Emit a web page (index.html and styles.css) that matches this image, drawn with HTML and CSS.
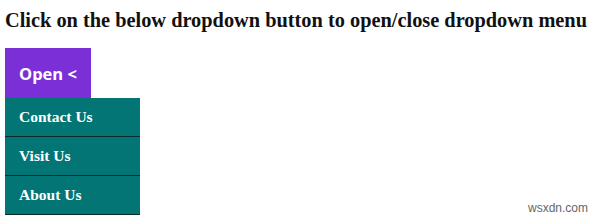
FILE: index.html
```html
<!DOCTYPE html>
<html>
<head>
  <title>Dropdown Example</title>
  <link rel="stylesheet" href="styles.css">
</head>
<body>
  <h2 class="title">Click on the below dropdown button to open/close dropdown menu</h2>
  <div class="dropdown">
    <button class="dropdown-btn">Open &lt;</button>
    <div class="dropdown-menu">
      <a href="#" class="dropdown-item">Contact Us</a>
      <a href="#" class="dropdown-item">Visit Us</a>
      <a href="#" class="dropdown-item">About Us</a>
    </div>
  </div>
  <div class="watermark">wsxdn.com</div>
</body>
</html>
```

FILE: styles.css
```css
body {
  margin: 0;
  padding: 0 5px;
  height: 223px;
  background-color: #fff;
  font-family: "Liberation Serif", "Times New Roman", serif;
  position: relative;
  overflow: hidden;
}

.title {
  margin: 0;
  padding-top: 9px;
  font-size: 20.35px;
  line-height: 23px;
  font-weight: bold;
  color: #111;
}

.dropdown {
  margin-top: 16px;
}

.dropdown-btn {
  display: block;
  width: 86px;
  height: 50px;
  border: none;
  padding: 0 0 0 14px;
  text-align: left;
  background-color: #7b2fd6;
  color: #fff;
  font-family: "Open Sans", "Noto Sans", sans-serif;
  font-size: 16.5px;
  font-weight: bold;
}

.dropdown-menu {
  display: flex;
  flex-direction: column;
  width: 135px;
  background-color: #037575;
}

.dropdown-item {
  display: block;
  height: 38px;
  line-height: 38px;
  padding-left: 14px;
  border-bottom: 1px solid #0d2a2a;
  color: #fff;
  text-decoration: none;
  font-size: 15.5px;
  font-weight: bold;
}

.watermark {
  position: absolute;
  right: 12px;
  bottom: 8px;
  font-family: "Liberation Sans", Arial, sans-serif;
  font-size: 12px;
  color: #666;
}
```
